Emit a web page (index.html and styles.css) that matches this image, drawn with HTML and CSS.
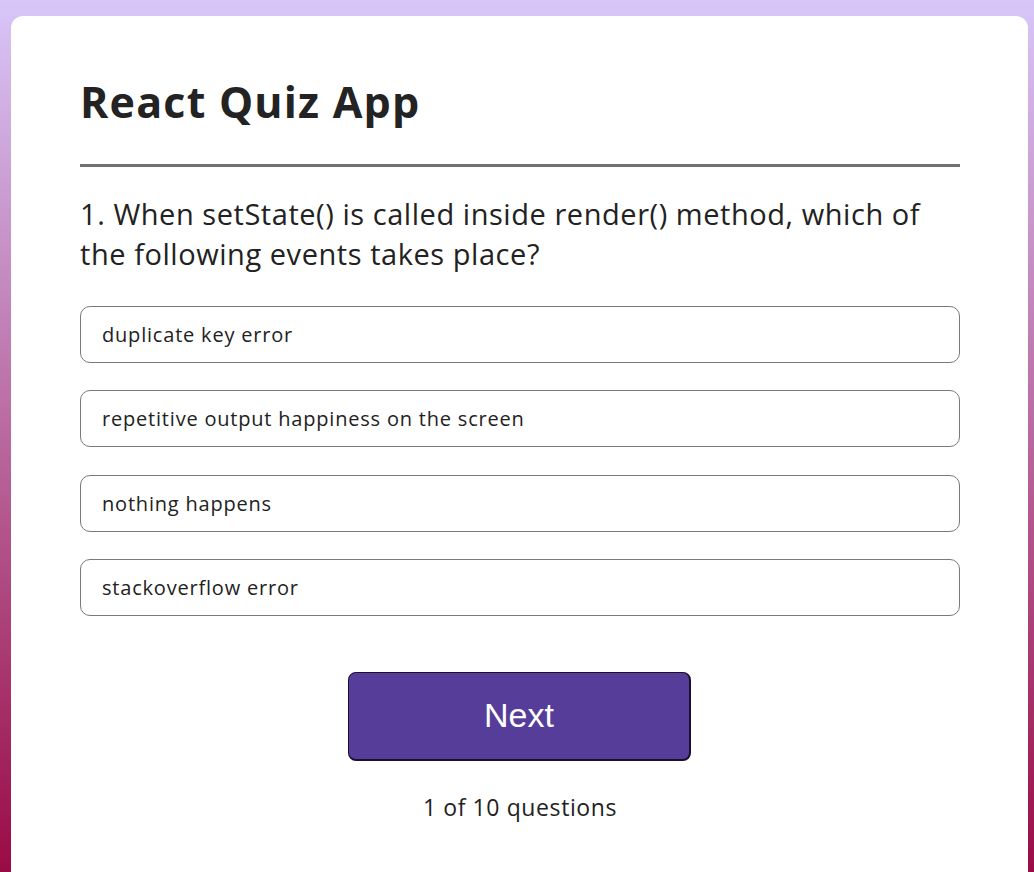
FILE: index.html
```html
<!DOCTYPE html>
<html lang="en">
<head>
<meta charset="utf-8">
<title>React Quiz App</title>
<link rel="stylesheet" href="styles.css">
</head>
<body>
<main class="card">
  <h1 class="title">React Quiz App</h1>
  <hr class="divider">
  <h2 class="question">1. When setState() is called inside render() method, which of the following events takes place?</h2>
  <ul class="options">
    <li class="option">duplicate key error</li>
    <li class="option">repetitive output happiness on the screen</li>
    <li class="option">nothing happens</li>
    <li class="option">stackoverflow error</li>
  </ul>
  <div class="actions">
    <button class="next-btn">Next</button>
    <p class="counter">1 of 10 questions</p>
  </div>
</main>
</body>
</html>
```

FILE: styles.css
```css
html, body {
  margin: 0;
  padding: 0;
  height: 100%;
}
body {
  background: linear-gradient(to bottom, #d8c6f9 0%, #9a0b45 100%);
  font-family: "Open Sans", "Noto Sans", sans-serif;
  color: #222;
  overflow: hidden;
}
.card {
  margin: 16px 6px 0 11px;
  background: #fff;
  border-radius: 12px;
  padding: 60px 68px 60px 69px;
  min-height: 900px;
  box-sizing: border-box;
}
.title {
  margin: 0;
  font-size: 43px;
  font-weight: 700;
  line-height: 52px;
  letter-spacing: 1.2px;
  color: #232323;
}
.divider {
  border: none;
  height: 3px;
  background: #707070;
  margin: 36px 0 27px;
}
.question {
  margin: 0;
  font-size: 29px;
  font-weight: 400;
  line-height: 40px;
  letter-spacing: 0.55px;
  color: #222;
}
.options {
  list-style: none;
  margin: 32px 0 0;
  padding: 0;
  display: flex;
  flex-direction: column;
  gap: 27.3px;
}
.option {
  height: 57px;
  box-sizing: border-box;
  border: 1px solid #7a7a7a;
  border-radius: 10px;
  padding: 0 21px;
  display: flex;
  align-items: center;
  font-size: 20px;
  letter-spacing: 0.8px;
  color: #222;
}
.actions {
  display: flex;
  flex-direction: column;
  align-items: center;
  margin-top: 56px;
}
.next-btn {
  width: 343px;
  height: 89px;
  margin-right: 1px;
  background: #563d99;
  color: #fff;
  border: 1px solid #1c1030;
  border-bottom-width: 2px;
  border-right-width: 2px;
  border-radius: 8px;
  font-family: "Liberation Sans", Arial, sans-serif;
  font-size: 34px;
  cursor: pointer;
}
.counter {
  margin: 30px 0 0;
  font-size: 23px;
  line-height: 32px;
  letter-spacing: 0.6px;
  color: #222;
}
```
